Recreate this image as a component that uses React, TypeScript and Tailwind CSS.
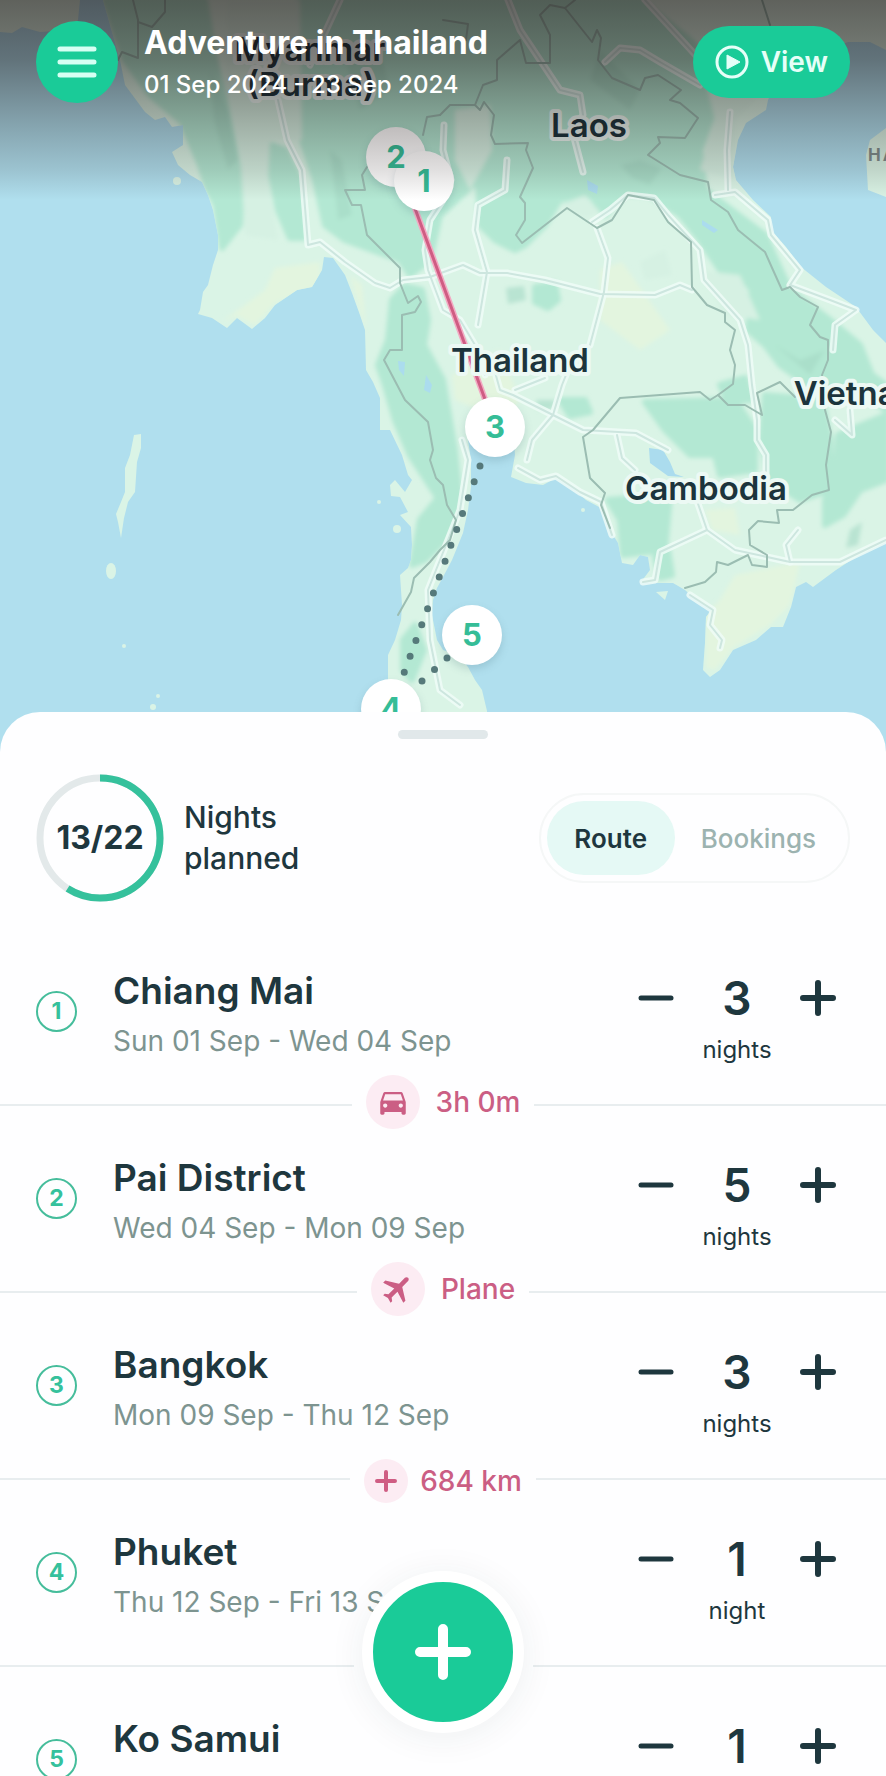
import React from "react";
import { MdDirectionsCar, MdFlight } from "react-icons/md";

const stops = [
  {
    name: "Chiang Mai",
    dates: "Sun 01 Sep - Wed 04 Sep",
    nights: 3,
    transport: "car",
    label: "3h 0m",
  },
  {
    name: "Pai District",
    dates: "Wed 04 Sep - Mon 09 Sep",
    nights: 5,
    transport: "plane",
    label: "Plane",
  },
  {
    name: "Bangkok",
    dates: "Mon 09 Sep - Thu 12 Sep",
    nights: 3,
    transport: "add",
    label: "684 km",
  },
  {
    name: "Phuket",
    dates: "Thu 12 Sep - Fri 13 Sep",
    nights: 1,
    transport: "none",
    label: "",
  },
  {
    name: "Ko Samui",
    dates: "Fri 13 Sep - Sat 14 Sep",
    nights: 1,
    transport: "none",
    label: "",
  },
];

const mainland =
  "M103 0L110 25L120 60L125 85L145 112L155 120L165 117L172 127L183 125L183 145L172 152L178 165L190 175L202 182L208 195L213 210L218 235L218 250L213 265L208 285L203 292L200 310L198 314L212 318L227 328L237 318L252 329L265 318L275 305L297 290L312 287L322 270L324 257L333 258L345 275L352 293L360 315L365 330L366 370L373 382L380 398L380 430L390 430L402 455L408 475L412 480L405 492L395 480L390 485L391 496L400 497L408 512L400 515L411 527L412 545L411 560L408 568L400 575L402 605L401 620L395 640L388 655L388 690L386 712V760H488L487 711L482 690L475 680L468 667L458 655L443 650L437 640L432 615L433 600L437 588L443 577L452 560L463 533L468 510L471 487L471 460L468 440H514L515 455L511 477L526 483L543 485L556 478L573 488L586 500L601 508L610 530L618 543L622 563L633 565L640 555L648 557L650 570L641 582L660 583L673 583L685 590L696 600L713 608L706 617L705 643L703 670L710 677L720 670L733 650L756 640L771 627L783 627L791 607L796 587L806 582L813 587L836 570L856 557L886 542V343L873 330L856 307L826 287L801 267L786 247L771 230V217L753 200L736 180L733 167L738 140L746 123L766 110L768 100L775 85L800 60L848 42L870 42L886 50V0Z";

const forests = [
  "105,0 205,0 215,60 225,100 235,150 242,190 240,225 222,248 216,205 208,190 200,165 182,122 150,95 125,60",
  "272,145 285,150 300,180 303,238 290,238 278,210 268,160",
  "300,0 640,0 690,40 720,70 718,100 700,150 705,190 765,235 790,290 830,320 860,345 872,375 886,385 886,410 850,385 815,390 780,365 765,345 748,330 752,290 740,275 720,270 700,240 680,215 650,195 625,193 605,215 590,195 560,200 545,225 525,245 515,250 495,240 480,225 478,180 462,195 440,215 430,260 410,275 400,260 372,250 345,240 325,225 315,180 302,140",
  "378,365 388,340 392,300 405,286 422,290 428,320 424,345 443,380 455,450 460,500 445,540 425,560 412,565 420,520 438,498 410,455 395,420 385,385",
  "645,402 735,400 755,430 755,470 720,475 715,455 690,455 665,430",
  "765,395 822,400 830,440 830,490 800,500 770,480 762,440",
  "608,500 670,495 665,550 623,555 620,520",
  "838,435 886,415 886,480 860,490 843,515 825,525 825,500 835,470",
  "403,640 415,625 424,650 412,680 403,670",
  "535,287 555,284 558,300 548,308 535,302",
  "560,400 585,400 590,412 570,416",
  "655,557 668,550 672,575 660,578",
  "720,385 745,378 752,400 728,402",
];

const shades = [
  "210,70 228,110 238,160 228,170 214,120",
  "330,150 342,160 352,215 338,220",
  "620,165 640,160 662,168 650,185 632,178",
  "506,288 524,286 526,300 508,304",
  "536,400 556,400 552,410 538,410",
  "850,530 862,522 858,545 846,548",
  "345,60 380,50 390,90 360,110",
  "600,50 640,90 630,110 590,80",
  "775,345 800,360 825,350 810,375",
];

const plains = [
  "222,322 265,290 275,268 320,262 320,285 275,303 255,325 237,316",
  "600,270 622,262 670,330 640,350 600,320",
  "706,615 720,600 735,575 800,562 790,605 770,625 733,648 715,670 706,668",
  "705,510 735,508 740,535 712,530",
  "452,375 500,350 520,400 505,420 455,400",
  "350,275 362,285 366,330 360,310",
];

const valleys = [
  "228,0 300,0 302,140 270,140 268,180 278,240 245,235 240,150 225,80",
  "455,110 490,105 492,150 470,190 455,160",
  "700,60 760,95 735,120 735,180 700,170 715,120",
  "698,270 740,275 760,320 725,315",
  "640,262 665,250 672,275 645,280",
  "560,205 585,195 600,212 585,218",
];

const borders = [
  "133,0 138,20 138,58 122,52 118,60",
  "138,22 152,27 165,12 165,0",
  "440,115 427,117 423,135",
  "367,167 362,175 365,190 345,190 352,205 361,205 367,235 400,268 400,283 408,303 418,296 421,302 415,312 402,315 402,350 390,350 384,360 405,400 428,422 433,450 430,460 436,478 443,485 447,505 456,520 450,540 440,550 430,562 414,578 411,592 398,615",
  "443,20 468,24 466,40",
  "575,0 565,8 550,5 540,15 550,35 550,63 526,63 520,40 497,60 497,80 483,85 475,105 450,105 440,115",
  "565,8 592,42 597,30 601,38 598,60 612,78 640,90 645,78 658,75 681,90 670,100 680,103 698,118 685,138 658,137 660,143 648,155 680,175 708,182 711,200 728,212 738,230 765,252 773,270 782,290 790,287 800,297 818,307 810,325 820,337 828,340 828,360 822,375 825,410 831,432 826,465 829,490 812,495 793,510 777,510 779,523 758,521 749,530 750,545 767,555 767,567 752,565 748,555 728,565 717,562 716,572 705,582 685,588",
  "475,105 480,110 484,102 494,115 491,135 495,144 528,143 526,150 533,168 520,197 525,203 525,220 516,235 522,243 567,208 597,228 612,220 628,195 654,200 668,222 691,242 692,287 707,305 725,313 725,322 735,330 730,350 735,365 733,384 718,395 710,400 700,392 620,398 593,430 583,437 590,478 605,493 601,505 610,528",
  "718,395 728,405 745,405 762,415 757,393 780,382 795,397",
  "762,0 770,25",
];

const roads = [
  "278,100 287,140 302,170 308,245 320,242 345,262 375,283 390,288 403,280 430,277 463,265 480,273 507,273 545,280 600,294 655,295 680,285 692,290",
  "444,125 443,150 451,180 443,200 430,220 425,250 428,270 443,310 460,320 475,345 485,375",
  "507,160 505,190 478,205 475,230 487,272 478,325",
  "597,228 608,258 604,292 590,345",
  "592,222 610,210 628,195 654,198 668,215 700,250 704,280 740,320 748,345 752,385 757,420 757,440 766,455 766,480",
  "715,195 735,192 768,220 771,235 800,270 790,285 830,300 856,310 835,325 833,350",
  "730,112 727,150 728,190",
  "495,372 500,390 513,395 553,415 583,430 636,433 668,450",
  "553,415 532,440 527,460",
  "568,370 562,385 553,415",
  "515,390 545,378",
  "518,468 540,480 556,476 580,492 601,502 612,535",
  "695,495 707,530 735,550 790,562 840,562 886,540",
  "707,530 660,552 655,580 643,582",
  "617,435 622,458 635,470",
  "690,595 713,610 710,625 722,640 720,648",
  "850,410 852,435 835,420",
  "790,562 786,545 798,530",
  "462,440 468,460 460,510 440,560 428,590 430,640 440,690 460,705",
  "508,0 520,30 560,90 580,95 583,115 572,130 583,172",
  "605,62 620,48 640,50 660,62 700,85",
  "310,65 340,0",
  "645,0 700,60",
];

const labels = [
  { text: "Myanmar", x: 310, y: 61 },
  { text: "(Burma)", x: 311, y: 96 },
  { text: "Laos", x: 589, y: 137 },
  { text: "Thailand", x: 520, y: 372 },
  { text: "Cambodia", x: 706, y: 500 },
  { text: "Vietnam", x: 860, y: 405 },
];

const pins = [
  { n: 2, x: 396, y: 157 },
  { n: 1, x: 424, y: 181 },
  { n: 3, x: 495, y: 427 },
  { n: 5, x: 472, y: 635 },
  { n: 4, x: 391, y: 709 },
];

const RouteMap = () => {
  return (
    <svg
      viewBox="0 0 886 760"
      preserveAspectRatio="xMidYMin slice"
      className="block w-full h-[760px]"
      role="img"
      aria-label="Route map"
    >
      <defs>
        <clipPath id="mainland">
          <path d={mainland} />
        </clipPath>
        <filter id="terrain">
          <feGaussianBlur stdDeviation="2" />
        </filter>
        <filter id="pin-shadow" x="-50%" y="-50%" width="200%" height="200%">
          <feGaussianBlur stdDeviation="4" />
        </filter>
      </defs>
      <rect width="886" height="760" fill="#b0dfee" />

      {/* land */}
      <g fill="#daf4e6">
        <path d="M0 0H80L78 20L70 30L40 32L22 27L12 33L0 32Z" />
        <path d={mainland} />
        <path d="M886 128L870 140L866 155L868 190L886 197Z" />
        <path d="M134 435L141 434L141 448L137 462L135 492L128 502L124 518L121 538L118 522L116 514L121 502L125 492L125 468L130 455Z" />
        <circle cx="177" cy="181" r="4" />
        <ellipse cx="111" cy="571" rx="5" ry="8" />
        <circle cx="397" cy="529" r="4" />
        <path d="M656 592L668 591L665 600Z" />
        <circle cx="124" cy="646" r="2" />
        <circle cx="158" cy="696" r="2" />
        <circle cx="153" cy="707" r="3" />
        <circle cx="379" cy="502" r="2" />
        <circle cx="583" cy="510" r="2" />
      </g>

      {/* terrain */}
      <g clipPath="url(#mainland)">
        <g filter="url(#terrain)">
          {forests.map((points) => (
            <polygon
              key={points}
              points={points}
              fill="#b3e8d3"
              stroke="#b3e8d3"
              strokeWidth="6"
              strokeLinejoin="round"
            />
          ))}
          {valleys.map((points) => (
            <polygon key={points} points={points} fill="#d6f1e3" />
          ))}
          {shades.map((points) => (
            <polygon key={points} points={points} fill="#a3d9c4" opacity="0.6" />
          ))}
          {plains.map((points) => (
            <polygon key={points} points={points} fill="#e3f5df" />
          ))}
        </g>
      </g>

      {/* lakes */}
      <g fill="#abdcee">
        <path d="M649 448L663 450L670 462L675 474L684 477L668 476L650 463Z" />
        <path d="M587 180L598 186L597 194L588 190Z" />
        <path d="M702 220L718 230L714 233L702 225Z" />
        <path d="M398 361L405 362L404 376L399 370Z" />
        <path d="M426 375L432 385L430 393L424 390Z" />
      </g>

      <g fill="none" strokeLinejoin="round" strokeLinecap="round">
        {roads.map((points) => (
          <polyline
            key={points}
            points={points}
            stroke="#effbf7"
            strokeWidth="7"
            opacity="0.85"
          />
        ))}
        {roads.map((points) => (
          <polyline
            key={points}
            points={points}
            stroke="#cde6df"
            strokeWidth="2"
          />
        ))}
        {borders.map((points) => (
          <polyline
            key={points}
            points={points}
            stroke="#9bbdb2"
            strokeWidth="2"
          />
        ))}
      </g>

      {/* legs of the trip */}
      <g fill="none" strokeLinecap="round">
        <path d="M413 203L486 402" stroke="#f3a9c2" strokeWidth="6" />
        <path d="M413 203L486 402" stroke="#cf5d83" strokeWidth="3" />
        <path
          d="M480 466L404 673"
          stroke="#56797a"
          strokeWidth="7"
          strokeDasharray="0 16.9"
        />
        <path
          d="M447 658L421 682"
          stroke="#56797a"
          strokeWidth="7"
          strokeDasharray="0 17"
        />
      </g>

      {labels.map((label) => (
        <text
          key={label.text}
          x={label.x}
          y={label.y}
          textAnchor="middle"
          fontSize="33"
          fontWeight="600"
          fill="#1c343c"
          stroke="#ecf9f4"
          strokeWidth="8"
          strokeLinejoin="round"
          paintOrder="stroke"
        >
          {label.text}
        </text>
      ))}
      <text x="868" y="161" fontSize="17" fontWeight="700" fill="#7f8d8c" letterSpacing="2">
        HAINAN
      </text>

      {pins.map((pin) => (
        <g key={pin.n}>
          <circle
            cx={pin.x}
            cy={pin.y + 4}
            r="30"
            fill="#3b6470"
            opacity="0.2"
            filter="url(#pin-shadow)"
          />
          <circle cx={pin.x} cy={pin.y} r="30" fill="#ffffff" />
        </g>
      ))}
      {pins.map((pin) => (
        <text
          key={pin.n}
          x={pin.x}
          y={pin.y + 11}
          textAnchor="middle"
          fontSize="31"
          fontWeight="700"
          fill="#35bd97"
        >
          {pin.n}
        </text>
      ))}
    </svg>
  );
};

const Header = () => {
  return (
    <header className="absolute inset-x-0 top-0 h-[200px] px-9 pt-[21px] flex items-start bg-[linear-gradient(to_bottom,rgba(20,8,8,0.62)_0%,rgba(20,8,8,0.5)_30%,rgba(20,8,8,0.28)_62%,rgba(20,8,8,0.13)_85%,rgba(20,8,8,0)_100%)]">
      <button
        aria-label="Menu"
        className="size-[82px] shrink-0 rounded-full bg-[#1acb98] flex items-center justify-center"
      >
        <svg width="40" height="32" viewBox="0 0 40 32" stroke="#d6fff3" strokeWidth="5" strokeLinecap="round">
          <path d="M3 3H37M3 16H37M3 29H37" />
        </svg>
      </button>
      <div className="ml-[26px] text-white">
        <h1 className="text-[32px] leading-[44px] font-bold">
          Adventure in Thailand
        </h1>
        <p className="text-2xl leading-10 font-medium">01 Sep 2024 - 23 Sep 2024</p>
      </div>
      <button className="ml-auto mt-[5px] h-[72px] px-[22px] rounded-full bg-[#1acb98] text-[#e6fff8] flex items-center gap-3">
        <svg width="34" height="34" viewBox="0 0 34 34">
          <circle cx="17" cy="17" r="15" fill="none" stroke="#e6fff8" strokeWidth="3" />
          <path d="M12 10L25 17L12 24Z" fill="#e6fff8" stroke="#e6fff8" strokeWidth="1" strokeLinejoin="round" />
        </svg>
        <span className="text-[28px] font-semibold">View</span>
      </button>
    </header>
  );
};

const Summary = () => {
  return (
    <div className="px-9 pt-[35px] pb-[43px] flex items-center">
      <div className="relative size-32 shrink-0 flex items-center justify-center">
        <svg viewBox="0 0 128 128" className="absolute inset-0 -rotate-90" fill="none" strokeWidth="7">
          <circle cx="64" cy="64" r="60" stroke="#e3e9ea" />
          <circle cx="64" cy="64" r="60" stroke="#35c19c" pathLength="22" strokeDasharray="13 22" />
        </svg>
        <span className="text-[32px] font-bold">13/22</span>
      </div>
      <p className="ml-5 w-36 text-[30px] leading-[41px] font-medium">
        Nights planned
      </p>
      <div className="ml-auto h-[90px] p-1.5 rounded-full border-2 border-[#f5f7f7] flex text-[26px]">
        <button className="w-[128px] rounded-full bg-[#e5f9f5] font-semibold">
          Route
        </button>
        <button className="px-[26px] font-medium text-[#9cb3b0]">Bookings</button>
      </div>
    </div>
  );
};

const Leg = ({ transport, label }: { transport: string; label: string }) => {
  return (
    <div className="h-[54px] flex items-center">
      <div className="h-[2px] flex-1 bg-[#e8edef]" />
      {transport === "none" && <div className="w-[179px]" />}
      {transport === "add" && (
        <button className="px-[14px] pt-1 flex items-center gap-3 text-[28px] font-medium text-[#cb5e84]">
          <span className="size-11 rounded-full bg-[#fcecf3] flex items-center justify-center">
            <svg width="24" height="24" viewBox="0 0 24 24" stroke="#cf5d83" strokeWidth="4" strokeLinecap="round">
              <path d="M12 3V21M3 12H21" />
            </svg>
          </span>
          {label}
        </button>
      )}
      {(transport === "car" || transport === "plane") && (
        <button className="px-[14px] pb-1.5 flex items-center gap-4 text-[28px] font-medium text-[#cb5e84]">
          <span className="size-[54px] rounded-full bg-[#fcecf3] flex items-center justify-center">
            {transport === "car" ? (
              <MdDirectionsCar className="size-[34px]" />
            ) : (
              <MdFlight className="size-9 rotate-45" />
            )}
          </span>
          {label}
        </button>
      )}
      <div className="h-[2px] flex-1 bg-[#e8edef]" />
    </div>
  );
};

const App = () => {
  return (
    <main className="relative w-full h-screen overflow-hidden flex flex-col bg-[#b0dfee] text-[#1e373e] font-['Inter','Open_Sans',sans-serif]">
      <section className="relative h-[712px] shrink-0">
        <RouteMap />
        <Header />
      </section>

      <section className="relative flex-1 min-h-0 rounded-t-[40px] bg-[#fefeff] flex flex-col">
        <div className="mx-auto mt-[18px] h-[9px] w-[90px] shrink-0 rounded-full bg-[#e1e8ea]" />
        <Summary />

        <ol className="flex-1 min-h-0 overflow-y-auto [scrollbar-width:none]">
          {stops.map((stop, i) => (
            <li key={stop.name}>
              <div className="h-[133px] pl-9 pr-[50px] flex items-start">
                <span className="size-[41px] shrink-0 self-center rounded-full border-2 border-[#45bd9b] text-[#35c19c] text-[23px] font-bold flex items-center justify-center">
                  {i + 1}
                </span>
                <div className="ml-9 pt-6 flex-1 min-w-0">
                  <h2 className="text-[37px] leading-[44px] font-semibold">{stop.name}</h2>
                  <p className="mt-2.5 text-[28px] leading-9 text-[#7d9490] whitespace-nowrap">
                    {stop.dates}
                  </p>
                </div>
                <div className="pt-[29px] flex items-start">
                  <button aria-label={`Fewer nights in ${stop.name}`} className="h-12 flex items-center">
                    <svg width="36" height="36" viewBox="0 0 36 36" stroke="#1e373e" strokeWidth="5" strokeLinecap="round">
                      <path d="M3 18H33" />
                    </svg>
                  </button>
                  <div className="w-[126px] text-center">
                    <p className="text-[46px] leading-[48px] font-semibold">{stop.nights}</p>
                    <p className="mt-2.5 text-2xl leading-9">
                      {stop.nights === 1 ? "night" : "nights"}
                    </p>
                  </div>
                  <button aria-label={`More nights in ${stop.name}`} className="h-12 flex items-center">
                    <svg width="36" height="36" viewBox="0 0 36 36" stroke="#1e373e" strokeWidth="6" strokeLinecap="round">
                      <path d="M3 18H33M18 3V33" />
                    </svg>
                  </button>
                </div>
              </div>
              <Leg transport={stop.transport} label={stop.label} />
            </li>
          ))}
        </ol>
      </section>

      <button
        aria-label="Add destination"
        className="absolute bottom-[43px] left-1/2 -translate-x-1/2 size-[162px] rounded-full border-[11px] border-white bg-[#1acb98] shadow-[0_4px_36px_rgba(30,55,62,0.07)] flex items-center justify-center"
      >
        <svg width="58" height="58" viewBox="0 0 58 58" stroke="#ffffff" strokeWidth="10" strokeLinecap="round">
          <path d="M6 29H52M29 6V52" />
        </svg>
      </button>
    </main>
  );
};

export default App;
